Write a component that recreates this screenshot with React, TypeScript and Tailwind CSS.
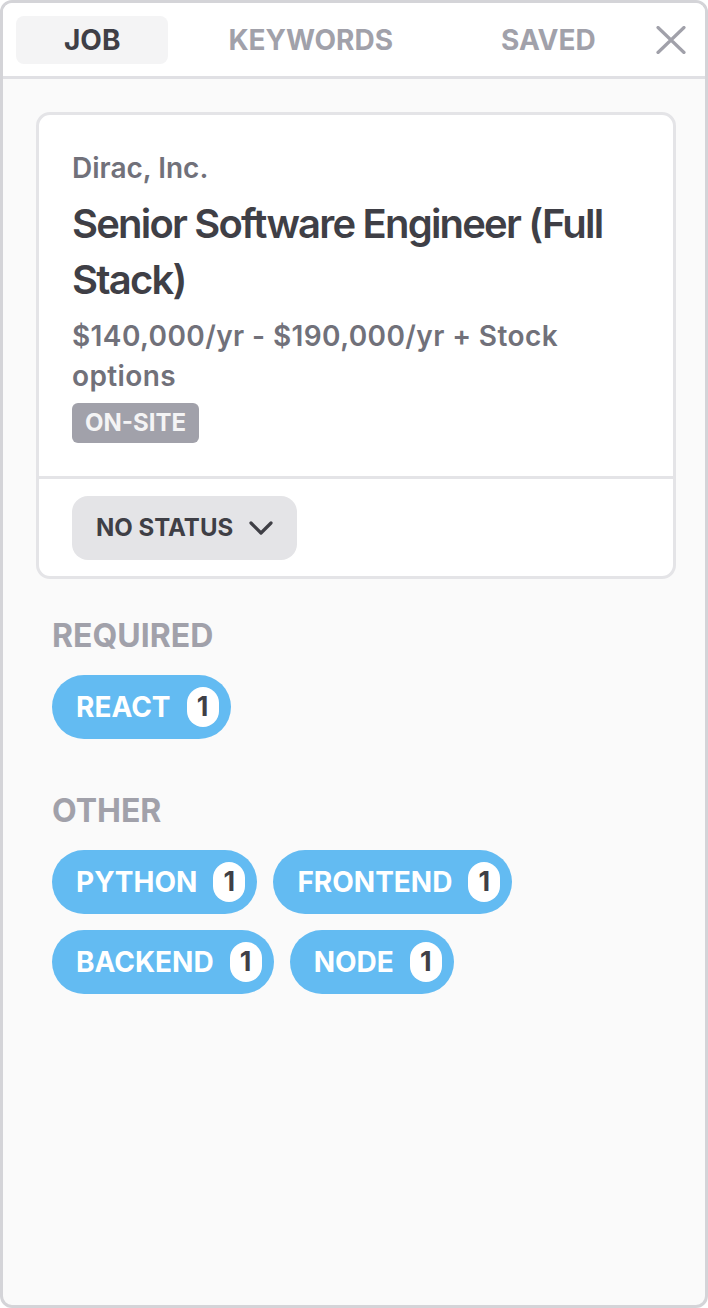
type Keyword = { name: string; count: number };

const REQUIRED: Keyword[] = [{ name: "REACT", count: 1 }];
const OTHER: Keyword[] = [
  { name: "PYTHON", count: 1 },
  { name: "FRONTEND", count: 1 },
  { name: "BACKEND", count: 1 },
  { name: "NODE", count: 1 },
];

const TABS = ["JOB", "KEYWORDS", "SAVED"];

const KeywordPill = ({ keyword }: { keyword: Keyword }) => (
  <div className="flex items-center h-[64px] rounded-full bg-[#63bbf2] pl-[24px] pr-[12px] gap-[16px]">
    <span className="text-[28px] leading-[40px] font-bold text-white">{keyword.name}</span>
    <span className="flex items-center justify-center w-[32px] h-[40px] rounded-full bg-white text-[27px] leading-[40px] font-bold text-[#3f3f46]">
      {keyword.count}
    </span>
  </div>
);

const KeywordSection = ({ title, keywords }: { title: string; keywords: Keyword[] }) => (
  <div className="flex flex-col gap-[15px]">
    <h2 className="text-[32px] leading-[48px] font-bold text-[#a1a1aa]">{title}</h2>
    <div className="flex flex-wrap gap-[16px]">
      {keywords.map((k) => (
        <KeywordPill key={k.name} keyword={k} />
      ))}
    </div>
  </div>
);

export default function App() {
  return (
    <div
      className="h-[1308px] w-[708px] flex flex-col overflow-hidden rounded-[12px] border-[3px] border-[#d4d4d8] bg-[#fafafa]"
      style={{ fontFamily: "Inter, 'Noto Sans', sans-serif" }}
    >
      <div className="flex items-center gap-[12px] h-[76px] px-[13px] bg-white border-b-[3px] border-[#e0e0e4]">
        {TABS.map((tab, i) => (
          <button
            key={tab}
            className={
              i === 0
                ? "h-[48px] px-[48px] rounded-[8px] bg-[#f4f4f5] text-[28px] font-bold text-[#3f3f46]"
                : "h-[48px] px-[48px] rounded-[8px] text-[28px] font-bold text-[#a1a1aa]"
            }
          >
            {tab}
          </button>
        ))}
        <button className="ml-auto mr-[22px] flex items-center justify-center w-[30px] h-[30px] text-[#a1a1aa]">
          <svg width="30" height="28" viewBox="0 0 30 28" fill="none" stroke="currentColor" strokeWidth="3.2" strokeLinecap="round">
            <path d="M2 1.5 L28 26.5 M28 1.5 L2 26.5" />
          </svg>
        </button>
      </div>

      <div className="flex flex-col pt-[33px] pl-[33px] pr-[29px]">
        <div className="rounded-[14px] border-[3px] border-[#e4e4e7] bg-white">
          <div className="flex flex-col items-start px-[33px] pt-[33px] pb-[33px]">
            <div className="text-[28px] leading-[40px] font-semibold text-[#71717a]">Dirac, Inc.</div>
            <h1 className="mt-[8px] text-[40px] leading-[56px] font-semibold tracking-[-0.045em] text-[#3f3f46]">
              Senior Software Engineer (Full Stack)
            </h1>
            <div className="mt-[8px] text-[28px] leading-[40px] font-semibold tracking-[0.4px] text-[#71717a]">
              $140,000/yr - $190,000/yr + Stock options
            </div>
            <span className="mt-[7px] h-[40px] px-[13px] rounded-[6px] bg-[#a1a1aa] text-[24px] leading-[40px] font-bold text-[#f4f4f5]">
              ON-SITE
            </span>
          </div>
          <div className="border-t-[3px] border-[#e4e4e7] px-[33px] pt-[17px] pb-[16px]">
            <button className="flex items-center gap-[16px] h-[64px] px-[24px] rounded-[16px] bg-[#e4e4e7] text-[24px] font-bold text-[#3f3f46]">
              NO STATUS
              <svg width="24" height="14" viewBox="0 0 24 14" fill="none" stroke="currentColor" strokeWidth="3.2" strokeLinecap="round" strokeLinejoin="round">
                <path d="M2 2 L12 12 L22 2" />
              </svg>
            </button>
          </div>
        </div>

        <div className="flex flex-col gap-[48px] mt-[33px] px-[16px]">
          <KeywordSection title="REQUIRED" keywords={REQUIRED} />
          <KeywordSection title="OTHER" keywords={OTHER} />
        </div>
      </div>
    </div>
  );
}
